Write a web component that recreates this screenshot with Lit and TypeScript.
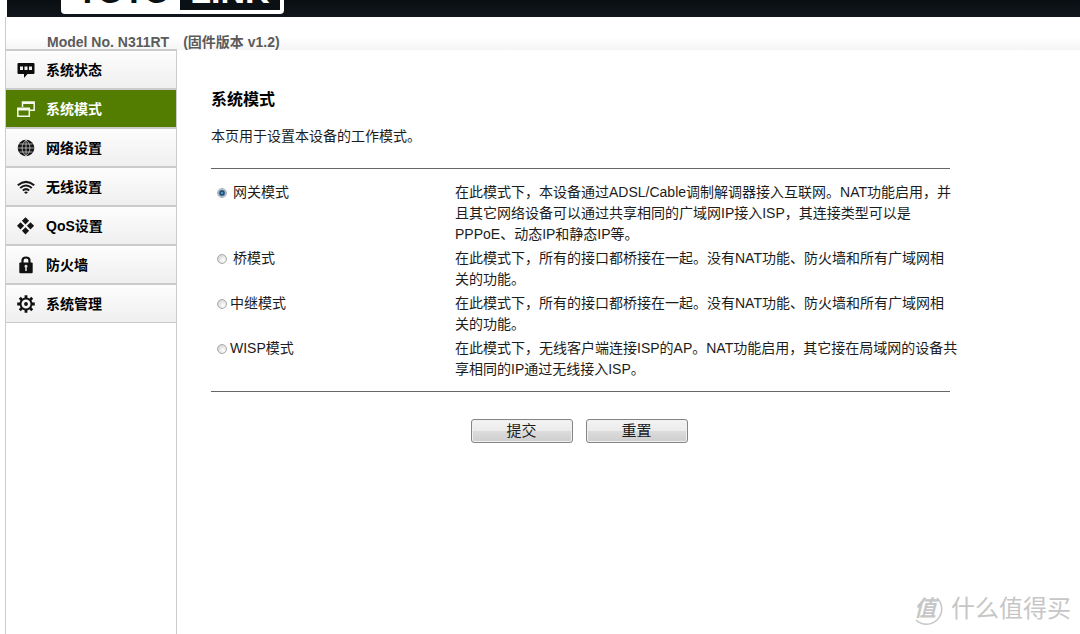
import { LitElement, html, css, svg } from "lit";
import { customElement, property, state } from "lit/decorators.js";
import { classMap } from "lit/directives/class-map.js";

const icons: Record<string, unknown> = {
  status: svg`<path d="M1.500 2h15q1 0 1 1v9q0 1-1 1H10.500L7 17v-4H1.500q-1 0-1-1V3q0-1 1-1z" fill="#0c0c0c"/><path d="M3 5.500h3v3.500H3zM7.500 5.500h3v3.500h-3zM12 5.500h3v3.500h-3z" fill="#eee"/>`,
  mode: svg`<path d="M5.500 7V2h11.700v8.300H13M.800 8.300h11.500v8H.800z" fill="none" stroke="#f4f8ec" stroke-width="1.500"/><path d="M.8 9.600h11.500M5.500 3h11.700" stroke="#f4f8ec" stroke-width="1.800"/>`,
  network: svg`<circle cx="9" cy="9" r="8.300" fill="#141414"/><path d="M9 1v16M1 9h16M2.500 5h13M2.500 13h13M9 1C3.700 5.500 3.700 12.500 9 17M9 1c5.300 4.500 5.300 11.500 0 16" fill="none" stroke="#ddd" stroke-width=".7"/>`,
  wifi: svg`<path d="M.8 7.300Q9 .5 17.200 7.300M3.200 10Q9 5 14.800 10M5.800 12.500Q9 9.800 12.200 12.500" fill="none" stroke="#151515" stroke-width="2"/><path d="M7 14.200Q9 12.600 11 14.200L9 16z" fill="#151515"/>`,
  qos: svg`<path d="M8.500.2l3.600 3.600-3.600 3.600-3.600-3.600zM8.500 10.200l3.600 3.600-3.600 3.600-3.600-3.600zM3.500 5.200l3.600 3.600-3.600 3.600L0 8.800zM13.500 5.200l3.600 3.600-3.600 3.600-3.600-3.600z" fill="#151515"/>`,
  lock: svg`<path d="M5.500 8V4.500Q5.500 1.500 9 1.500t3.500 3V8" fill="none" stroke="#111" stroke-width="2.200"/><rect x="2.300" y="6.500" width="13.400" height="10.800" rx="1" fill="#111"/><path d="M9 8.800a1.500 1.500 0 0 1 .8 2.800V15H8.200v-3.400A1.500 1.500 0 0 1 9 8.800z" fill="#ddd"/>`,
  gear: svg`<path d="M9 .2v3M9 14.800v3M.2 9h3M14.800 9h3M2.800 2.800l2.100 2.100M13.100 13.100l2.100 2.100M2.800 15.200l2.100-2.100M13.100 4.900l2.100-2.100" stroke="#111" stroke-width="2.800"/><circle cx="9" cy="9" r="5.500" fill="none" stroke="#111" stroke-width="2"/><circle cx="9" cy="9" r="1.900" fill="#111"/>`,
};

const menu = [
  { icon: "status", label: "系统状态" },
  { icon: "mode", label: "系统模式" },
  { icon: "network", label: "网络设置" },
  { icon: "wifi", label: "无线设置" },
  { icon: "qos", label: "QoS设置" },
  { icon: "lock", label: "防火墙" },
  { icon: "gear", label: "系统管理" },
];

const modes = [
  {
    id: "gateway",
    label: "网关模式",
    spaced: true,
    lines: [
      "在此模式下，本设备通过ADSL/Cable调制解调器接入互联网。NAT功能启用，并",
      "且其它网络设备可以通过共享相同的广域网IP接入ISP，其连接类型可以是",
      "PPPoE、动态IP和静态IP等。",
    ],
  },
  {
    id: "bridge",
    label: "桥模式",
    spaced: true,
    lines: ["在此模式下，所有的接口都桥接在一起。没有NAT功能、防火墙和所有广域网相", "关的功能。"],
  },
  {
    id: "repeater",
    label: "中继模式",
    spaced: false,
    lines: ["在此模式下，所有的接口都桥接在一起。没有NAT功能、防火墙和所有广域网相", "关的功能。"],
  },
  {
    id: "wisp",
    label: "WISP模式",
    spaced: false,
    lines: ["在此模式下，无线客户端连接ISP的AP。NAT功能启用，其它接在局域网的设备共", "享相同的IP通过无线接入ISP。"],
  },
];

@customElement("side-menu")
export class SideMenu extends LitElement {
  @property({ type: Number }) current = 1;

  static styles = css`
    :host { display: block; }
    .item {
      display: flex;
      align-items: center;
      gap: 11px;
      box-sizing: border-box;
      height: 39px;
      padding-left: 11px;
      border-top: 2px solid #cbcbcb;
      background: linear-gradient(#fdfdfd, #efefef);
      color: #000;
      font-size: 14px;
      font-weight: bold;
      line-height: 20px;
      text-decoration: none;
    }
    .item.active { background: #527d00; color: #fff; }
    .icon { width: 18px; height: 18px; flex: none; }
    .list { border-bottom: 1px solid #cbcbcb; }
  `;

  render() {
    return html`<nav class="list">
      ${menu.map(
        (m, i) => html`<a class=${classMap({ item: true, active: i === this.current })} href="#${m.icon}">
          <svg class="icon" viewBox="0 0 18 18" aria-hidden="true">${icons[m.icon]}</svg><span>${m.label}</span>
        </a>`
      )}
    </nav>`;
  }
}

@customElement("app-root")
export class AppRoot extends LitElement {
  @state() private mode = "gateway";

  static styles = css`
    :host {
      display: flex;
      flex-direction: column;
      min-height: 100vh;
      box-sizing: border-box;
      padding-left: 5px;
      position: relative;
      overflow: hidden;
      background: #fff;
      color: #1c1c1c;
      font: 14px/21px "Liberation Sans", "Noto Sans CJK SC", sans-serif;
    }
    .banner {
      display: flex;
      align-items: flex-end;
      height: 17px;
      box-sizing: border-box;
      margin-left: 2px;
      padding: 0 0 3px 54px;
      background: linear-gradient(#090e13, #11171c);
    }
    .logo {
      display: flex;
      gap: 10px;
      box-sizing: border-box;
      width: 223px;
      height: 40px;
      padding: 0 4px 4px 16px;
      border-radius: 4px;
      background: #fff;
      color: #0b1015;
      font-size: 34px;
      font-weight: bold;
      line-height: 34px;
      flex: none;
    }
    .logo-part { height: 36px; }
    .logo-box { flex: 1; padding-left: 10px; background: #0b1015; color: #fff; }
    .model {
      display: flex;
      gap: 14px;
      align-items: flex-end;
      box-sizing: border-box;
      height: 33px;
      padding-left: 41px;
      border-left: 1px solid #ccc;
      background: linear-gradient(#fff 60%, #f5f5f5);
      color: #5b5b5b;
      font-weight: bold;
      line-height: 16px;
    }
    .body { display: flex; flex: 1; }
    .side { width: 170px; flex: none; margin-top: -1px; border: solid #ccc; border-width: 0 1px; }
    .main { flex: 0 1 739px; padding: 38px 20px 0 34px; }
    .title { margin: 0; color: #000; font-size: 16px; line-height: 24px; }
    .intro { margin: 14px 0 21px; }
    .modes {
      width: 100%;
      table-layout: fixed;
      border-collapse: separate;
      border-spacing: 0;
      border: solid #666;
      border-width: 1px 0;
      padding: 13px 0 8px;
    }
    .choice, .about { padding: 0 0 3px; vertical-align: top; font-weight: normal; text-align: left; }
    .choice { width: 244px; }
    .about { white-space: nowrap; }
    .pick { display: flex; align-items: center; gap: 3px; padding-left: 6px; }
    .pick.spaced { gap: 6px; }
    .radio {
      appearance: none;
      width: 10px;
      height: 10px;
      margin: 0;
      border: 1px solid #aaa;
      border-radius: 50%;
      background: radial-gradient(circle at 65% 65%, #fff, #c9c9c9);
    }
    .radio:checked {
      border-color: #a5afb8;
      background: radial-gradient(circle, #6fc4e6 0, #0d3c63 2px, #d5e0e8 4px);
    }
    .actions { display: flex; justify-content: center; gap: 13px; margin: 27px 3px 0 0; }
    .button {
      width: 102px;
      height: 24px;
      padding: 0;
      border: 1px solid #858585;
      border-radius: 3px;
      background: linear-gradient(#f3f3f3, #ebebeb 50%, #dcdcdc 50%, #cecece);
      box-shadow: inset 0 0 0 1px #f0f0f0;
      color: #1c1c1c;
      font: 15px/20px "Liberation Sans", "Noto Sans CJK SC", sans-serif;
    }
    .mark {
      position: absolute;
      right: 9px;
      bottom: 9px;
      display: flex;
      align-items: center;
      gap: 8px;
      color: #c6c6c6;
      font-size: 24px;
      line-height: 32px;
    }
    .seal { width: 32px; height: 32px; }
    .seal-text { font-size: 22px; font-style: italic; font-weight: bold; }
  `;

  render() {
    return html`
      <header class="banner">
        <div class="logo"><span class="logo-part">TOTO</span><span class="logo-part logo-box">LINK</span></div>
      </header>
      <div class="model"><span>Model No. N311RT</span><span>(固件版本 v1.2)</span></div>
      <div class="body">
        <aside class="side"><side-menu .current=${1}></side-menu></aside>
        <main class="main">
          <h1 class="title">系统模式</h1>
          <p class="intro">本页用于设置本设备的工作模式。</p>
          <form @submit=${(e: Event) => e.preventDefault()}>
            <table class="modes">
              <tbody>
                ${modes.map(
                  (m) => html`<tr>
                    <th class="choice" scope="row">
                      <label class=${classMap({ pick: true, spaced: m.spaced })}>
                        <input class="radio" type="radio" name="mode" value=${m.id} ?checked=${m.id === this.mode}
                          @change=${() => (this.mode = m.id)} />${m.label}
                      </label>
                    </th>
                    <td class="about">${m.lines.map((l, i) => (i ? html`<br />${l}` : l))}</td>
                  </tr>`
                )}
              </tbody>
            </table>
            <div class="actions">
              <button class="button" type="submit">提交</button>
              <button class="button" type="reset">重置</button>
            </div>
          </form>
        </main>
      </div>
      <div class="mark">
        <svg class="seal" viewBox="0 0 32 32" aria-hidden="true">
          <path d="M26 5A14 14 0 0 1 5 27" fill="none" stroke="#c6c6c6" stroke-width="1.500" />
          <text class="seal-text" x="3" y="23" fill="#c6c6c6">值</text>
        </svg>
        <span>什么值得买</span>
      </div>
    `;
  }
}
